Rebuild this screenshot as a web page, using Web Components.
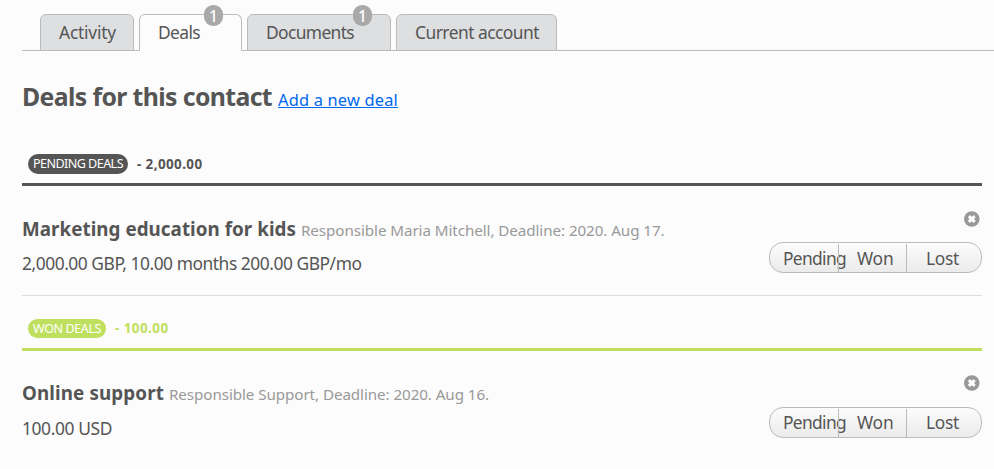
<!DOCTYPE html>
<html lang="en"><head><meta charset="utf-8"><title>Deals</title>
<style>
html,body{margin:0;background:#fcfcfc}
body{font-family:"Noto Sans","Open Sans",sans-serif;color:#555;overflow:hidden;height:469px}
</style></head><body>
<deals-page></deals-page>
<script>
const define=(name,html,setup)=>customElements.define(name,class extends HTMLElement{
  connectedCallback(){
    if(this.shadowRoot)return;
    const root=this.attachShadow({mode:"open"});
    root.innerHTML=typeof html==="function"?html(this):html;
    if(setup)setup(this,root);
  }
});
// A single line of text, tracked so that it spans the given measure.
define("text-run",el=>`<style>
:host{display:block;flex:none;white-space:nowrap;line-height:24px;width:${el.getAttribute("measure")}px;font-size:${el.getAttribute("size")}px}
span{display:inline-block}:host([link]) span{text-decoration:underline;text-decoration-thickness:1px;text-underline-offset:1px;text-decoration-skip-ink:none}</style><span>${el.getAttribute("text")}</span>`,(el,root)=>{
  const span=root.querySelector("span"),want=+el.getAttribute("measure");
  const diff=want-span.getBoundingClientRect().width;
  span.style.letterSpacing=diff/(el.getAttribute("text").length)+"px";
});
define("tab-item",el=>`<style>
:host{display:block;position:relative;box-sizing:border-box;height:37px;border:1px solid #bbb;border-radius:6px 6px 0 0;background:#dedfe1;padding:5px 0 0 18px;width:${el.getAttribute("w")}px}
:host([active]){background:#fcfcfc;border-bottom-color:#fcfcfc}
.badge{position:absolute;top:-10px;left:${el.getAttribute("badge-x")}px;width:19px;height:21px;border-radius:9px;background:#a9a9a9;color:#fff;font-size:15.5px;font-weight:500;line-height:23px;text-align:center}
</style><text-run text="${el.getAttribute("label")}" size="17.4" measure="${el.getAttribute("measure")}"></text-run>${el.hasAttribute("badge")?`<div class="badge">${el.getAttribute("badge")}</div>`:""}`);
define("tab-bar",`<style>
:host{display:flex;align-items:flex-end;gap:5px;box-sizing:border-box;height:51px;padding-left:18px;background:linear-gradient(#bbb,#bbb) 0 100%/100% 1px no-repeat}
</style><slot></slot>`);
define("group-header",el=>`<style>
:host{display:flex;align-items:flex-end;box-sizing:border-box;border-bottom:3px solid var(--tone);color:var(--tone);padding:0 0 var(--pad,9px) 6px}
.pill{height:var(--pill-h,20px);box-sizing:border-box;padding:0 5px;border-radius:10px;background:var(--tone);color:#fff;margin-right:9px}
.pill text-run{margin-top:-2px}
.total{margin-bottom:-2px;font-weight:700}
</style><div class="pill"><text-run text="${el.getAttribute("label")}" size="12.6" measure="${el.getAttribute("lm")}"></text-run></div>
<text-run class="total" text="${el.getAttribute("total")}" size="13.4" measure="${el.getAttribute("tm")}"></text-run>`);
define("close-icon",`<style>:host{display:block;width:16px;height:16px}svg{display:block}</style>
<svg width="16" height="16" viewBox="0 0 16 16"><circle cx="7.8" cy="8" r="7.8" fill="#999"/><path d="M4.9 5.1 10.7 10.9M10.7 5.1 4.9 10.9" stroke="#fff" stroke-width="3"/></svg>`);
define("status-switch",`<style>
:host{display:grid;grid-template-columns:68px 68px 75px;box-sizing:border-box;width:213px;height:31px;border:1px solid #bbb;border-radius:14px;background:linear-gradient(#fcfcfc,#ebebeb)}
div{padding-top:var(--label-top,3px);height:29px;box-sizing:border-box}
div+div{border-left:1px solid #bbb;margin-top:1px;padding-top:calc(var(--label-top,3px) - 1px);height:28px}
.a{padding-left:13px}.b{padding-left:18px}.c{padding-left:19px}
</style><div class="a"><text-run text="Pending" size="17.4" measure="63"></text-run></div><div class="b"><text-run text="Won" size="17.4" measure="36.5"></text-run></div><div class="c"><text-run text="Lost" size="17.4" measure="33"></text-run></div>`);
define("deal-row",el=>`<style>
:host{display:flex;justify-content:space-between;box-sizing:border-box;height:110px;border-bottom:1px solid #ddd}
:host([last]){border-bottom-color:transparent}
.info{padding-top:var(--top,31px)}
.title{display:flex;align-items:baseline;gap:5px;height:34px}
.name{font-weight:700}.meta{color:#999}.amount{margin-top:var(--amount-top,0)}
.actions{display:flex;flex-direction:column;align-items:flex-end;padding-top:var(--icon-top,25px)}
close-icon{margin:0 2px var(--icon-gap,15px) 0}
</style><div class="info"><div class="title"><text-run class="name" text="${el.getAttribute("name")}" size="18.8" measure="${el.getAttribute("nm")}"></text-run><text-run class="meta" text="${el.getAttribute("meta")}" size="15.2" measure="${el.getAttribute("mm")}"></text-run></div>
<text-run class="amount" text="${el.getAttribute("amount")}" size="17.4" measure="${el.getAttribute("am")}"></text-run></div>
<div class="actions"><close-icon></close-icon><status-switch></status-switch></div>`);
define("deals-page",`<style>
:host{display:block;padding-left:22px}
main{width:960px}
.heading{display:flex;align-items:baseline;gap:6px;height:94px;box-sizing:border-box;padding-top:33px}
h1{margin:0;font-size:24.8px;line-height:24px}
a{color:#0068ef}
.pending{--tone:#555;height:41px}
.won{--tone:#bfdf5e;--pill-h:19px;--pad:10px;height:55px}
.second{--top:30px;--amount-top:1px;--icon-top:24px;--icon-gap:16px;--label-top:2px}
</style>
<tab-bar><tab-item label="Activity" w="94" measure="57"></tab-item><tab-item active label="Deals" w="103" measure="42" badge="1" badge-x="64"></tab-item><tab-item label="Documents" w="144" measure="88" badge="1" badge-x="105"></tab-item><tab-item label="Current account" w="161" measure="124"></tab-item></tab-bar>
<main><div class="heading"><h1><text-run text="Deals for this contact" size="24.8" measure="250"></text-run></h1><a><text-run link text="Add a new deal" size="16.4" measure="120"></text-run></a></div>
<group-header class="pending" label="PENDING DEALS" lm="90" total="- 2,000.00" tm="65.5"></group-header>
<deal-row name="Marketing education for kids" nm="274" meta="Responsible Maria Mitchell, Deadline: 2020. Aug 17." mm="363.5" amount="2,000.00 GBP, 10.00 months 200.00 GBP/mo" am="339.5"></deal-row>
<group-header class="won" label="WON DEALS" lm="68" total="- 100.00" tm="53.5"></group-header>
<deal-row class="second" last name="Online support" nm="142" meta="Responsible Support, Deadline: 2020. Aug 16." mm="320" amount="100.00 USD" am="90"></deal-row></main>`);
</script></body></html>
